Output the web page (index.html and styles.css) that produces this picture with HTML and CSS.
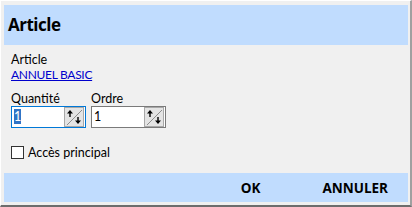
FILE: index.html
```html
<!DOCTYPE html>
<html lang="fr">
<head>
    <meta charset="UTF-8">
    <title>Article</title>
    <link rel="stylesheet" href="styles.css">
</head>
<body>
    <div class="window">
        <div class="header">Article</div>

        <div class="content">
            <div class="field-label">Article</div>
            <a class="article-link" href="#">ANNUEL BASIC</a>

            <div class="spin-row">
                <div class="spin-group">
                    <label>Quantité</label>
                    <div class="spin-box focused">
                        <span class="value"><span class="selected">1</span></span>
                        <span class="spin-btn">
                            <svg width="18" height="18" viewBox="0 0 18 18">
                                <line x1="2" y1="17" x2="17" y2="2" stroke="#8c8c8c" stroke-width="1"/>
                                <path d="M5 2 L2 5.5 H4.3 V9 H5.7 V5.5 H8 Z" fill="#000"/>
                                <path d="M13 16 L10 12.5 H12.3 V9 H13.7 V12.5 H16 Z" fill="#000"/>
                            </svg>
                        </span>
                    </div>
                </div>
                <div class="spin-group">
                    <label>Ordre</label>
                    <div class="spin-box">
                        <span class="value">1</span>
                        <span class="spin-btn">
                            <svg width="18" height="18" viewBox="0 0 18 18">
                                <line x1="2" y1="17" x2="17" y2="2" stroke="#8c8c8c" stroke-width="1"/>
                                <path d="M5 2 L2 5.5 H4.3 V9 H5.7 V5.5 H8 Z" fill="#000"/>
                                <path d="M13 16 L10 12.5 H12.3 V9 H13.7 V12.5 H16 Z" fill="#000"/>
                            </svg>
                        </span>
                    </div>
                </div>
            </div>

            <label class="check">
                <span class="box"></span>
                Accès principal
            </label>
        </div>

        <div class="footer">
            <button class="action">OK</button>
            <button class="action">ANNULER</button>
        </div>
    </div>
</body>
</html>
```

FILE: styles.css
```css
body {
    margin: 0;
    font-family: Lato, "Open Sans", sans-serif;
    font-size: 12.5px;
    color: #000;
    background: #fff;
}
.window {
    box-sizing: border-box;
    width: 412px;
    height: 207px;
    display: flex;
    flex-direction: column;
    padding: 4px 2px 3px 3px;
    background: #f0f0f0;
    border-top: 1px solid #fff;
    border-left: 1px solid #fff;
    border-right: 2px solid #a0a0a0;
    border-bottom: 2px solid #6d6d6d;
}
.header {
    height: 40px;
    flex: none;
    background: #c0dcfe;
    font-family: "Open Sans", sans-serif;
    font-weight: bold;
    font-size: 17px;
    letter-spacing: -0.5px;
    line-height: 40px;
    padding-left: 4px;
}
.content {
    flex: 1;
    padding: 7px 0 0 7px;
}
.field-label {
    line-height: 15px;
}
.article-link {
    display: inline-block;
    color: #0000cc;
    font-size: 12px;
    letter-spacing: -0.3px;
    line-height: 15px;
}
.spin-row {
    display: flex;
    gap: 5px;
    margin-top: 10px;
}
.spin-group label {
    display: block;
    line-height: 14px;
}
.spin-box {
    box-sizing: border-box;
    width: 75px;
    height: 22px;
    display: flex;
    align-items: center;
    justify-content: space-between;
    background: #fff;
    border: 1px solid #7a7a7a;
    padding: 0 1px 0 2px;
}
.spin-box.focused {
    border-color: #0078d7;
}
.value {
    line-height: 16px;
}
.selected {
    background: #3074c6;
    color: #fff;
}
.spin-btn {
    display: flex;
    width: 18px;
    height: 18px;
    background: #e4e4e4;
    border: 1px solid #a8a8a8;
}
.check {
    display: flex;
    align-items: center;
    gap: 4px;
    margin-top: 17px;
}
.check .box {
    box-sizing: border-box;
    width: 13px;
    height: 13px;
    background: #fff;
    border: 1px solid #333;
}
.footer {
    height: 29px;
    flex: none;
    background: #c0dcfe;
    display: flex;
    justify-content: flex-end;
    align-items: center;
}
.action {
    background: none;
    border: none;
    font-family: "Open Sans", sans-serif;
    font-weight: bold;
    font-size: 13.5px;
    padding: 0;
    cursor: pointer;
}
.action:first-child {
    margin-right: 62px;
}
.action:last-child {
    margin-right: 20px;
}
```
